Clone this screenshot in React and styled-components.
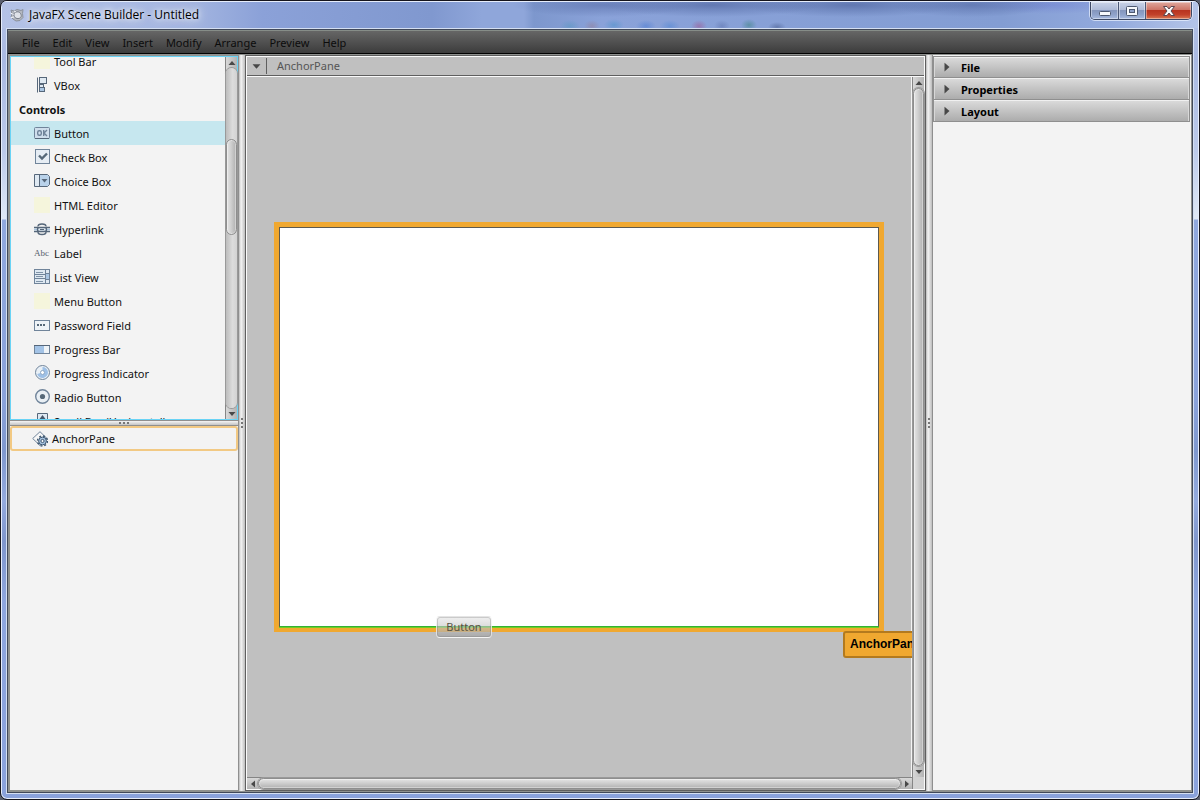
import React, { useState } from 'react';
import styled, { createGlobalStyle, css } from 'styled-components';

const GlobalStyle = createGlobalStyle`
    * {
        box-sizing: border-box;
    }
    body {
        margin: 0;
        background: #5a5f6e;
        font-family: "Noto Sans", "Open Sans", sans-serif;
        font-size: 11px;
        line-height: 16px;
        color: #111;
    }
    button {
        font: inherit;
        color: inherit;
        padding: 0;
        border: 0;
        background: none;
    }
`

const Frame = styled.div`
    display: flex;
    flex-direction: column;
    height: 100vh;
    padding: 0 5px 5px;
    border: 1px solid #15141c;
    border-radius: 7px;
    box-shadow: inset 0 0 0 1px #e6edfb;
    overflow: hidden;
    background:
        linear-gradient(180deg, #b4c2e6 0, #a9b9e2 60px, #bccaea 150px, #dfe8f6 218px, transparent 219px),
        linear-gradient(180deg, #90a8de 219px, #8aa2da 400px, #7f98ce 450px, #94abde 500px, #7f96cc 540px, #8ea6de 600px, #8aa2dc 100%);
`

const TitleBar = styled.header`
    display: flex;
    flex: none;
    align-items: flex-start;
    height: 27px;
    margin: 0 -4px;
    padding: 0 6px 0 8px;
    border-top: 1px solid #e6edfb;
    background:
        radial-gradient(ellipse 90px 12px at 600px 3px, rgba(70, 90, 150, 0.45), transparent),
        radial-gradient(ellipse 110px 12px at 710px 3px, rgba(60, 80, 140, 0.5), transparent),
        radial-gradient(ellipse 110px 12px at 850px 3px, rgba(60, 80, 140, 0.5), transparent),
        radial-gradient(ellipse 80px 12px at 970px 3px, rgba(70, 90, 150, 0.5), transparent),
        radial-gradient(ellipse 70px 9px at 1050px 3px, rgba(90, 100, 205, 0.3), transparent),
        radial-gradient(ellipse 10px 6px at 568px 24px, rgba(80, 150, 190, 0.45), transparent),
        radial-gradient(ellipse 8px 6px at 590px 24px, rgba(150, 120, 140, 0.45), transparent),
        radial-gradient(ellipse 10px 6px at 612px 23px, rgba(70, 145, 200, 0.5), transparent),
        radial-gradient(ellipse 10px 6px at 644px 24px, rgba(70, 120, 210, 0.5), transparent),
        radial-gradient(ellipse 10px 6px at 668px 24px, rgba(70, 130, 210, 0.45), transparent),
        radial-gradient(ellipse 8px 6px at 697px 24px, rgba(160, 80, 140, 0.5), transparent),
        radial-gradient(ellipse 8px 6px at 720px 24px, rgba(80, 100, 160, 0.4), transparent),
        radial-gradient(ellipse 8px 6px at 747px 23px, rgba(60, 130, 130, 0.55), transparent),
        radial-gradient(ellipse 9px 5px at 775px 25px, rgba(60, 80, 130, 0.45), transparent),
        linear-gradient(90deg, #b4c2e6 0, #a3b5e0 190px, #8ba1d8 260px, #8098cf 430px, #8fa6da 480px, #8fa6da 522px, #7d97cd 532px, #8aa2d9 600px, #839dd3 1000px, #93aadd 1110px, #b4c4e8 100%);
`

const TitleLabel = styled.h1`
    display: flex;
    align-items: center;
    gap: 5px;
    flex: 1;
    margin: 0;
    padding-top: 5px;
    font-family: "Open Sans", sans-serif;
    font-size: 12px;
    line-height: 16px;
    font-weight: 400;
    color: #000;
    text-shadow:
        0 0 4px rgba(255, 255, 255, 0.7),
        0 0 8px rgba(255, 255, 255, 0.8),
        0 0 12px rgba(255, 255, 255, 0.8);
`

const CaptionButtons = styled.div`
    display: flex;
    height: 18px;
    border: 1px solid #3d4965;
    border-top: 0;
    border-radius: 0 0 5px 5px;
    box-shadow: 0 0 0 1px rgba(235, 242, 255, 0.7);
    overflow: hidden;
`

const CaptionButton = styled.button`
    display: grid;
    place-items: center;
    width: ${p => (p.$close ? 46 : 27)}px;
    box-shadow: inset 0 0 0 1px rgba(255, 255, 255, 0.4);
    background: ${p => (p.$close
        ? 'linear-gradient(180deg, #dfa89e 0, #cd7567 45%, #b83420 50%, #c2412a 75%, #d97a55 100%)'
        : 'linear-gradient(180deg, #c9d3e8 0, #aebbd8 45%, #8596bd 50%, #8fa2ca 75%, #a9bbdf 100%)')};

    & + & {
        border-left: 1px solid #4b5877;
    }
`

const Client = styled.div`
    display: flex;
    flex: 1;
    min-height: 0;
    border: 1px solid #d4dff2;
`

const AppWindow = styled.div`
    display: flex;
    flex-direction: column;
    flex: 1;
    min-width: 0;
    border: 1px solid #41495a;
`

const MenuBar = styled.nav`
    display: flex;
    flex: none;
    align-items: center;
    gap: 13px;
    height: 24px;
    padding: 2px 0 0 14px;
    border-top: 1px solid #868d88;
    border-bottom: 1px solid #000;
    background: linear-gradient(180deg, #666 0, #3c3c3c 100%);
    color: #0c0c0c;
`

const Workspace = styled.main`
    display: flex;
    flex: 1;
    min-height: 0;
    padding: 1px 1px 1px 2px;
    background: #8f918f;
`

const Sidebar = styled.aside`
    display: flex;
    flex-direction: column;
    flex: none;
    width: 228px;
    padding: 1px 0;
`

const Library = styled.section`
    display: flex;
    flex: 1 1 0;
    min-height: 0;
    border: 1px solid #69d3f5;
    background: #f3f3f3;
`

const LibraryView = styled.div`
    flex: 1;
    overflow: hidden;
`

// the list is scrolled down by part of a row
const LibraryList = styled.ul`
    margin: -8px 0 0;
    padding: 0;
    list-style: none;
`

const LibraryItem = styled.li`
    display: flex;
    align-items: center;
    gap: 4px;
    height: 24px;
    padding-left: ${p => (p.$heading ? 8 : 23)}px;
    font-weight: ${p => (p.$heading ? 700 : 400)};
    background: ${p => (p.$selected ? '#c6e7ef' : 'transparent')};
    cursor: default;
`

const ItemName = styled.span`
    padding-top: 2px;
`

const Hierarchy = styled.section`
    flex: 1 1 2px;
    min-height: 0;
    background: #f3f3f3;
`

const TreeItem = styled.div`
    display: flex;
    align-items: center;
    gap: 4px;
    height: 25px;
    padding-left: 20px;
    border: 2px solid #f2c983;
    border-radius: 3px;
`

const Splitter = styled.div`
    display: flex;
    flex: none;
    align-items: center;
    justify-content: center;
    ${p => (p.$vertical ? css`
        width: ${p.$wide ? 7 : 6}px;
        border-left: ${p.$wide ? '1px solid #8f8f8f' : 0};
        background: linear-gradient(90deg, #b9b9b9 0, #f4f4f4 35%, #dedede 60%, #bdbdbd 100%);
    ` : css`
        height: 6px;
        border-top: 1px solid #8f8f8f;
        border-bottom: 1px solid #8f8f8f;
        background: linear-gradient(180deg, #f4f4f4 0, #c4c4c4 100%);
    `)}
`

const Grip = styled.span`
    display: flex;
    flex-direction: ${p => (p.$vertical ? 'column' : 'row')};
    gap: 2px;

    i {
        width: 2px;
        height: 2px;
        background: #777;
    }
`

const Bar = styled.div`
    display: flex;
    flex: none;
    flex-direction: ${p => (p.$vertical ? 'column' : 'row')};
    ${p => (p.$vertical ? 'width: 12px; border-left: 1px solid #858585;' : 'height: 12px; border-top: 1px solid #858585;')}
    background: linear-gradient(${p => (p.$vertical ? 90 : 180)}deg, #d8d8d8 0, #b4b4b4 100%);
`

const BarButton = styled.button`
    display: grid;
    place-items: center;
    flex: 0 0 11px;
`

const Track = styled.div`
    position: relative;
    flex: 1;
    border-radius: 6px;
    box-shadow: 0 0 0 1px #999;
    background: linear-gradient(${p => (p.$vertical ? 90 : 180)}deg, #bdbdbd 0, #dcdcdc 60%, #d2d2d2 100%);
`

const Thumb = styled.div`
    position: absolute;
    inset: 0;
    border: 1px solid #8e8e8e;
    border-radius: 6px;
    box-shadow: inset 0 0 0 1px rgba(255, 255, 255, 0.4);
    background: linear-gradient(${p => (p.$vertical ? 90 : 180)}deg, #e4e4e4 0, #cfcfcf 45%, #b0b0b0 100%);
`

const Editor = styled.section`
    display: flex;
    flex: 1;
    min-width: 0;
    border: 1px solid #5f5f5f;
`

const EditorBody = styled.div`
    display: flex;
    flex-direction: column;
    flex: 1;
    min-width: 0;
    border: 1px solid #fafafa;
    background: #c0c0c0;
`

const Breadcrumb = styled.div`
    display: flex;
    flex: none;
    align-items: center;
    height: 19px;
    border-bottom: 1px solid #5f5f5f;
    color: #555;

    button {
        display: grid;
        place-items: center;
        width: 20px;
        height: 16px;
        margin-right: 10px;
        border-right: 1px solid #5f5f5f;
    }
`

const ScrollPane = styled.div`
    display: grid;
    flex: 1;
    min-height: 0;
    grid-template-columns: minmax(0, 1fr) 12px;
    grid-template-rows: minmax(0, 1fr) 12px;
    border-top: 1px solid #fafafa;
`

const Viewport = styled.div`
    display: grid;
    place-items: center;
    overflow: hidden;
    padding-right: 1px;
    box-shadow: inset -1px 0 0 #f4f4f4;
`

const Corner = styled.div`
    border-left: 1px solid #858585;
    background: #d2d2d2;
`

const Artboard = styled.div`
    position: relative;
    width: 610px;
    height: 410px;
    border: 5px solid #f0a830;
`

const Scene = styled.div`
    height: 100%;
    border: 1px solid #5c5a50;
    border-bottom-color: #35b035;
    box-shadow: 0 1px 0 #6fd022;
    background: #fff;
`

const DraggedButton = styled.button`
    position: absolute;
    left: 157px;
    top: 389px;
    width: 56px;
    height: 22px;
    border: 1px solid rgba(255, 255, 255, 0.6);
    border-radius: 4px;
    box-shadow: inset 0 0 0 1px rgba(120, 120, 120, 0.3);
    background: linear-gradient(180deg, rgba(235, 235, 235, 0.8) 0, rgba(200, 200, 200, 0.6) 45%, rgba(160, 160, 160, 0.7) 100%);
    line-height: 20px;
    color: #56533f;
`

const SelectionTag = styled.div`
    position: absolute;
    left: 564px;
    top: 404px;
    padding: 3px 5px 4px;
    border: 2px solid #b37a1e;
    border-radius: 3px;
    background: #f0a830;
    font-family: "Liberation Sans", sans-serif;
    font-size: 12px;
    line-height: 16px;
    font-weight: 700;
    color: #000;
`

const Inspector = styled.aside`
    flex: none;
    width: 259px;
    margin-bottom: 1px;
    padding: 1px 1px 0 0;
    border-left: 1px solid #8f8f8f;
    background: #f3f3f3;
`

const Accordion = styled.div`
    border: 1px solid #8f8f8f;
    border-top: 0;
`

const PaneTitle = styled.button`
    display: flex;
    align-items: center;
    gap: 9px;
    width: 100%;
    height: 22px;
    padding-left: 8px;
    border-top: 1px solid #8f8f8f;
    box-shadow: inset 0 1px 0 #f0f0f0, inset 1px 0 0 #d8d8d8, inset -1px 0 0 #d8d8d8;
    background: linear-gradient(180deg, #dcdcdc 0, #acacac 100%);
    font-weight: 700;
    color: #000;

    &:first-child {
        height: 21px;
    }
`

const line = '#56677a'
const edge = '#70849a'
const fill = '#dfe9f2'
const blue = '#a9c5e2'

const glyphs = {
    blank: <rect width="16" height="16" fill="#f5f5dc" />,
    vbox: (
        <>
            <path d="M3.5 0.5v15" stroke={line} />
            <rect x="5.5" y="0.5" width="7" height="6" fill={fill} stroke={line} />
            <rect x="5.5" y="7.5" width="4" height="3" fill={fill} stroke={line} />
            <rect x="5.5" y="10.5" width="5" height="4" fill={blue} stroke={line} />
        </>
    ),
    button: (
        <>
            <rect x="0.5" y="2.5" width="15" height="11" rx="1" fill="#cfdeec" stroke={edge} />
            <path d="M1 13.5h14" stroke={line} />
            <rect x="3.7" y="5.7" width="3.6" height="4.6" rx="1.5" fill="none" stroke={edge} strokeWidth="1.4" />
            <path d="M9.7 5v6M13 5l-3 3 3 3" fill="none" stroke={edge} strokeWidth="1.4" />
        </>
    ),
    check: (
        <>
            <rect x="1.5" y="0.5" width="14" height="14" fill="#e6edf4" stroke={edge} />
            <path d="M5 6.5l3 3 5-5" fill="none" stroke="#566878" strokeWidth="2.4" />
        </>
    ),
    choice: (
        <>
            <path d="M0.5 1.5h13l2 2v8l-2 2h-13z" fill={fill} stroke={line} />
            <path d="M6 2h7.5l1.5 1.5v8l-1.5 1.5H6z" fill="#b9d2ea" />
            <path d="M5.5 2v11" stroke={line} />
            <path d="M7.5 6h6l-3 3.5z" fill={line} />
        </>
    ),
    link: (
        <>
            <path d="M4 5.5c0-2 2-2.5 4-2.5s4 0.5 4 2.5M4 11c0 1.5 2 2.5 4 2.5s4-1 4-2.5" fill="none" stroke={line} strokeWidth="1.4" />
            <path d="M0 6.5h4M12 6.5h4M0 10.5h4M12 10.5h4" stroke={line} strokeWidth="1.4" />
            <path d="M0 8.5h3M13 8.5h3" stroke={blue} strokeWidth="1.4" />
            <rect x="3.5" y="6.5" width="9" height="4" rx="2" fill={fill} stroke={line} strokeWidth="1.4" />
            <path d="M6 8.5h4" stroke={line} strokeWidth="1.2" />
        </>
    ),
    list: (
        <>
            <rect x="0.5" y="0.5" width="15" height="14" fill={fill} stroke={edge} />
            <path d="M11.5 1v13M11.5 4.5h4M11.5 10.5h4M1 5.5h10M1 9.5h10" stroke={edge} />
            <path d="M2 3.5h7M2 7.5h7M2 12.5h7" stroke="#8094a8" />
            <rect x="12" y="5" width="3" height="5" fill={blue} />
        </>
    ),
    password: (
        <>
            <rect x="0.5" y="3.5" width="15" height="10" fill="#eef3f7" stroke={edge} />
            <path d="M3 7h2v2H3zM6 7h2v2H6zM9 7h2v2H9z" fill="#566878" />
        </>
    ),
    progress: (
        <>
            <rect x="0.5" y="4.5" width="15" height="8" fill="#eef3f7" stroke={edge} />
            <rect x="1" y="5" width="9" height="7" fill="#a3c3e6" />
            <path d="M0 4.5h16" stroke={line} />
        </>
    ),
    indicator: (
        <>
            <circle cx="8.5" cy="7.5" r="7" fill="#e9f0f6" stroke={edge} />
            <path d="M8.5 2a5.5 5.5 0 1 1-5.3 7l3.3-1a2 2 0 1 0 2-2.5z" fill="#9ec0e6" />
            <circle cx="8.5" cy="7.5" r="2" fill="#fff" stroke="#8aa6c4" />
        </>
    ),
    radio: (
        <>
            <circle cx="8.5" cy="7.5" r="6.8" fill="#e9eff4" stroke={edge} strokeWidth="1.4" />
            <circle cx="8.5" cy="7.5" r="2.6" fill="#566878" />
        </>
    ),
    scroll: (
        <>
            <path d="M3.5 16V0.5h10V16" fill={fill} stroke={line} />
            <path d="M5.5 6h6l-3-4zM7.5 6h2v3h-2z" fill="#46566a" />
        </>
    ),
    anchor: (
        <>
            <path d="M0.7 7.5L8 0.7l7 6.8-7 7z" fill="#f7f7f7" stroke={edge} />
            <circle cx="10.5" cy="10" r="5" fill="none" stroke="#3d566f" strokeWidth="1.4" strokeDasharray="1.96 1.96" />
            <circle cx="10.5" cy="10" r="3.9" fill={blue} stroke="#3d566f" />
            <circle cx="10.5" cy="10" r="1.6" fill="#f4f8fb" stroke="#3d566f" />
        </>
    ),
    label: <text x="0" y="11" fontFamily="Liberation Serif, serif" fontSize="9" fill="#56606c">Abc</text>
}

const Icon = ({ name }) => (
    <svg width="16" height="16" viewBox="0 0 16 16" aria-hidden="true">{glyphs[name]}</svg>
)

const arrows = {
    up: 'M0.5 6h7L4 2z',
    down: 'M0.5 2h7L4 6z',
    left: 'M6 0.5v7L2 4z',
    right: 'M2 0.5v7L6 4z'
}

const Arrow = ({ dir, size = 8 }) => (
    <svg width={size} height={size} viewBox="0 0 8 8" aria-hidden="true">
        <path d={arrows[dir]} fill="#484848" />
    </svg>
)

const menus = ['File', 'Edit', 'View', 'Insert', 'Modify', 'Arrange', 'Preview', 'Help']

const library = [
    { name: 'Tool Bar', icon: 'blank' },
    { name: 'VBox', icon: 'vbox' },
    { name: 'Controls', heading: true },
    { name: 'Button', icon: 'button' },
    { name: 'Check Box', icon: 'check' },
    { name: 'Choice Box', icon: 'choice' },
    { name: 'HTML Editor', icon: 'blank' },
    { name: 'Hyperlink', icon: 'link' },
    { name: 'Label', icon: 'label' },
    { name: 'List View', icon: 'list' },
    { name: 'Menu Button', icon: 'blank' },
    { name: 'Password Field', icon: 'password' },
    { name: 'Progress Bar', icon: 'progress' },
    { name: 'Progress Indicator', icon: 'indicator' },
    { name: 'Radio Button', icon: 'radio' },
    { name: 'Scroll Bar (Horizontal)', icon: 'scroll' }
]

const ScrollBar = ({ vertical, start = 0, end = 0 }) => (
    <Bar $vertical={vertical}>
        <BarButton type="button" aria-label="Scroll back">
            <Arrow dir={vertical ? 'up' : 'left'} />
        </BarButton>
        <Track $vertical={vertical}>
            <Thumb $vertical={vertical} style={vertical ? { top: `${start}%`, bottom: `${end}%` } : undefined} />
        </Track>
        <BarButton type="button" aria-label="Scroll forward">
            <Arrow dir={vertical ? 'down' : 'right'} />
        </BarButton>
    </Bar>
)

const SplitHandle = ({ vertical, wide }) => (
    <Splitter $vertical={vertical} $wide={wide}>
        <Grip $vertical={vertical}><i /><i /><i /></Grip>
    </Splitter>
)

const Title = () => (
    <TitleBar>
        <TitleLabel>
            <svg width="14" height="14" viewBox="0 0 14 14" aria-hidden="true">
                <path d="M1 2l3 1 3-1.5 4 1 2-1-0.5 4 0.5 4-3 3-4 0.5-3-2-2-2 1-3z" fill="#b4b8c0" stroke="#8a909b" />
                <path d="M5 4.5c3-1.5 5-0.5 6 2s-1 4.5-4 4-4-4-2-6z" fill="#dfe2e8" stroke="#777d88" />
                <path d="M0.5 5l3 1.5M1 9.5l3-0.5M4 3l2 1" stroke="#f4f6fa" />
            </svg>
            JavaFX Scene Builder - Untitled
        </TitleLabel>
        <CaptionButtons>
            <CaptionButton type="button" aria-label="Minimize">
                <svg width="14" height="12" viewBox="0 0 14 12">
                    <rect x="1.5" y="6.5" width="11" height="4" rx="1" fill="#f7f9fc" stroke="#4d5870" />
                </svg>
            </CaptionButton>
            <CaptionButton type="button" aria-label="Maximize">
                <svg width="12" height="12" viewBox="0 0 12 12">
                    <rect x="0.5" y="1.5" width="11" height="9" rx="1" fill="#f7f9fc" stroke="#4d5870" />
                    <rect x="3.5" y="4.5" width="5" height="3" fill="#8fa2ca" stroke="#4d5870" />
                </svg>
            </CaptionButton>
            <CaptionButton $close type="button" aria-label="Close">
                <svg width="14" height="12" viewBox="0 0 14 12">
                    <path d="M1.5 1.5H5l2 2.5 2-2.5h3.5L9 6l3.5 4.5H9L7 8l-2 2.5H1.5L5 6z" fill="#fafafa" stroke="#5b4650" />
                </svg>
            </CaptionButton>
        </CaptionButtons>
    </TitleBar>
)

const App = () => {
    const [selected, setSelected] = useState('Button')

    return (
        <Frame>
            <GlobalStyle />
            <Title />
            <Client>
                <AppWindow>
                    <MenuBar>
                        {menus.map(m => <button type="button" key={m}>{m}</button>)}
                    </MenuBar>
                    <Workspace>
                        <Sidebar>
                            <Library>
                                <LibraryView>
                                    <LibraryList>
                                        {library.map(item => (
                                            <LibraryItem
                                                key={item.name}
                                                $heading={item.heading}
                                                $selected={item.name === selected}
                                                onClick={() => !item.heading && setSelected(item.name)}
                                            >
                                                {item.icon && <Icon name={item.icon} />}
                                                <ItemName>{item.name}</ItemName>
                                            </LibraryItem>
                                        ))}
                                    </LibraryList>
                                </LibraryView>
                                <ScrollBar vertical start={21} end={51} />
                            </Library>
                            <SplitHandle />
                            <Hierarchy>
                                <TreeItem>
                                    <Icon name="anchor" />
                                    AnchorPane
                                </TreeItem>
                            </Hierarchy>
                        </Sidebar>
                        <SplitHandle vertical wide />
                        <Editor>
                            <EditorBody>
                                <Breadcrumb>
                                    <button type="button" aria-label="Show path"><Arrow dir="down" size={9} /></button>
                                    AnchorPane
                                </Breadcrumb>
                                <ScrollPane>
                                    <Viewport>
                                        <Artboard>
                                            <Scene />
                                            <DraggedButton type="button">Button</DraggedButton>
                                            <SelectionTag>AnchorPane</SelectionTag>
                                        </Artboard>
                                    </Viewport>
                                    <ScrollBar vertical />
                                    <ScrollBar />
                                    <Corner />
                                </ScrollPane>
                            </EditorBody>
                        </Editor>
                        <SplitHandle vertical />
                        <Inspector>
                            <Accordion>
                                {['File', 'Properties', 'Layout'].map(t => (
                                    <PaneTitle type="button" key={t}>
                                        <Arrow dir="right" size={10} />
                                        <ItemName>{t}</ItemName>
                                    </PaneTitle>
                                ))}
                            </Accordion>
                        </Inspector>
                    </Workspace>
                </AppWindow>
            </Client>
        </Frame>
    )
}

export default App;
